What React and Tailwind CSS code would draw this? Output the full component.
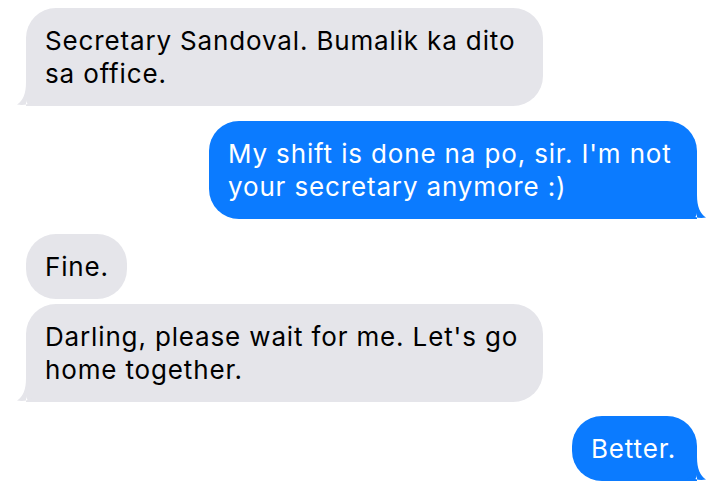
const GRAY = 'bg-[#e5e5ea] text-black';
const BLUE = 'bg-[#0b7bff] text-white';

function Tail({ side, color }) {
  const left = side === 'left';
  return (
    <svg
      width="24"
      height="24"
      viewBox="0 0 24 24"
      className={`absolute bottom-0 ${left ? '-left-[9px]' : '-right-[9px] -scale-x-100'}`}
    >
      <path d="M9 0 C9 12 6 18.5 0 22.5 C6 23.6 12 22.4 16 20 C19 22.6 22 24 24 24 L9 24 Z" fill={color} />
    </svg>
  );
}

function Bubble({ side, width, tail, children }) {
  const left = side === 'left';
  return (
    <div className={`flex ${left ? 'justify-start' : 'justify-end'}`}>
      <div
        className={`relative ${width} px-[19px] py-[16px] text-[26px] leading-[33px] tracking-[0.85px] rounded-[30px] ${
          left ? GRAY : BLUE
        } ${tail ? (left ? 'rounded-bl-[6px]' : 'rounded-br-[6px]') : ''}`}
      >
        {tail ? <Tail side={side} color={left ? '#e5e5ea' : '#0b7bff'} /> : null}
        <p className="relative whitespace-nowrap">{children}</p>
      </div>
    </div>
  );
}

export default function App() {
  return (
    <div
      className="w-[719px] h-[493px] bg-white overflow-hidden pt-[8px] pl-[26px] pr-[22px]"
      style={{ fontFamily: 'Inter, "Liberation Sans", Arial, sans-serif' }}
    >
      <Bubble side="left" width="w-[517px]" tail>
        Secretary Sandoval. Bumalik ka dito
        <br />
        sa office.
      </Bubble>
      <div className="h-[15px]" />
      <Bubble side="right" width="w-[488px]" tail>
        My shift is done na po, sir. I'm not
        <br />
        your secretary anymore :)
      </Bubble>
      <div className="h-[15px]" />
      <Bubble side="left" width="w-[101px]">
        Fine.
      </Bubble>
      <div className="h-[5px]" />
      <Bubble side="left" width="w-[517px]" tail>
        Darling, please wait for me. Let's go
        <br />
        home together.
      </Bubble>
      <div className="h-[14px]" />
      <Bubble side="right" width="w-[125px]" tail>
        Better.
      </Bubble>
    </div>
  );
}
